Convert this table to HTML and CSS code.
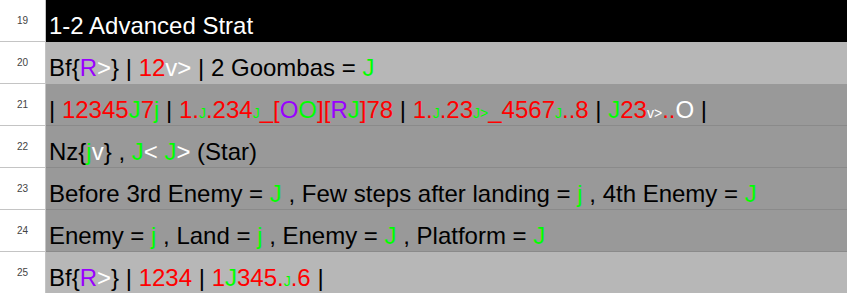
FILE: index.html
```html
<!DOCTYPE html>
<html>
<head>
<meta charset="utf-8">
<link rel="stylesheet" href="styles.css">
</head>
<body>
<div class="sheet">
  <div class="row">
    <div class="num">19</div>
    <div class="cell black"><span class="w">1-2 Advanced Strat</span></div>
  </div>
  <div class="row">
    <div class="num">20</div>
    <div class="cell light">Bf{<span class="p">R</span><span class="w">&gt;</span>} | <span class="r">12</span><span class="w">v&gt;</span> | 2 Goombas = <span class="g">J</span></div>
  </div>
  <div class="row">
    <div class="num">21</div>
    <div class="cell dark">| <span class="r">12345</span><span class="g">J</span><span class="r">7</span><span class="g">j</span> | <span class="r">1.</span><span class="g s">J</span><span class="r">.234</span><span class="g s">J</span><span class="r">_[</span><span class="p">O</span><span class="g">O</span><span class="r">][</span><span class="p">R</span><span class="g">J</span><span class="r">]78</span> | <span class="r">1.</span><span class="g s">J</span><span class="r">.23</span><span class="g s">J&gt;</span><span class="r">_4567</span><span class="g s">J</span><span class="r">..8</span> | <span class="g">J</span><span class="r">23</span><span class="w s">v&gt;</span><span class="r">..</span><span class="w">O</span> |</div>
  </div>
  <div class="row">
    <div class="num">22</div>
    <div class="cell dark">Nz{<span class="g">j</span><span class="w">v</span>} , <span class="g">J</span><span class="w">&lt;</span> <span class="g">J</span><span class="w">&gt;</span> (Star)</div>
  </div>
  <div class="row">
    <div class="num">23</div>
    <div class="cell dark">Before 3rd Enemy = <span class="g">J</span> , Few steps after landing = <span class="g">j</span> , 4th Enemy = <span class="g">J</span></div>
  </div>
  <div class="row">
    <div class="num">24</div>
    <div class="cell dark">Enemy = <span class="g">j</span> , Land = <span class="g">j</span> , Enemy = <span class="g">J</span> , Platform = <span class="g">J</span></div>
  </div>
  <div class="row">
    <div class="num">25</div>
    <div class="cell light">Bf{<span class="p">R</span><span class="w">&gt;</span>} | <span class="r">1234</span> | <span class="r">1</span><span class="g">J</span><span class="r">345.</span><span class="g s">J</span><span class="r">.6</span> |</div>
  </div>
</div>
</body>
</html>
```

FILE: styles.css
```css
html, body {
  margin: 0;
  padding: 0;
  background: #ffffff;
}

.sheet {
  width: 847px;
  height: 293px;
  overflow: hidden;
  font-family: "Liberation Sans", Arial, sans-serif;
}

.row {
  display: flex;
  height: 42px;
}

.num {
  width: 45px;
  flex: 0 0 45px;
  border-right: 1px solid #c4c4c4;
  border-bottom: 1px solid #c4c4c4;
  background: #ffffff;
  color: #444444;
  font-size: 10px;
  display: flex;
  align-items: center;
  justify-content: center;
}

.cell {
  flex: 1;
  box-sizing: border-box;
  padding: 12px 0 0 3px;
  font-size: 24px;
  line-height: 28px;
  color: #000000;
  white-space: nowrap;
  overflow: hidden;
}

.black {
  background: #000000;
  border-bottom: 1px solid #000000;
}

.light {
  background: #b7b7b7;
  border-bottom: 1px solid #b7b7b7;
}

.dark {
  background: #999999;
  border-bottom: 1px solid #8a8a8a;
}

.r { color: #ff0000; }
.g { color: #00ff00; }
.p { color: #9900ff; }
.w { color: #ffffff; }
.s { font-size: 14px; }
```
